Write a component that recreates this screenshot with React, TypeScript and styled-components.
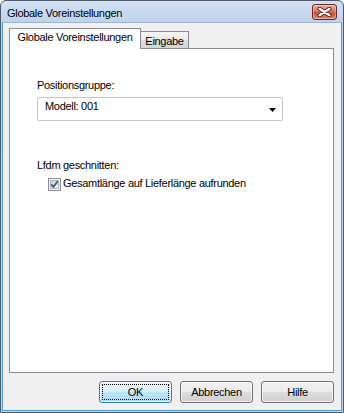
import React from 'react';
import styled, { createGlobalStyle } from 'styled-components';

const GlobalStyle = createGlobalStyle`
  html, body {
    margin: 0;
    padding: 0;
    background: #ffffff;
  }
  * {
    box-sizing: border-box;
  }
`;

const Window = styled.div`
  width: 344px;
  height: 413px;
  display: flex;
  flex-direction: column;
  border: 1px solid #4e5866;
  border-radius: 6px 6px 0 0;
  background: linear-gradient(#d3e1f3, #bed2ec 22px, #c4d7ee);
  font-family: 'Liberation Sans', Arial, sans-serif;
  font-size: 11px;
  letter-spacing: -0.3px;
  color: #000;
  overflow: hidden;
`;

const TitleBar = styled.div`
  height: 21px;
  flex: none;
  display: flex;
  align-items: flex-start;
  justify-content: space-between;
  padding: 0 6px;
`;

const Title = styled.div`
  margin-top: 6px;
  line-height: 13px;
`;

const CloseButton = styled.div`
  margin-top: 3px;
  width: 25px;
  height: 16px;
  display: flex;
  align-items: center;
  justify-content: center;
  border: 1px solid #6b2a21;
  border-radius: 3px;
  background: linear-gradient(#e7ada1, #d27a66 45%, #c24d36 55%, #d98a74);
  box-shadow: inset 0 0 0 1px rgba(255, 255, 255, 0.35);
`;

const Client = styled.div`
  flex: 1;
  display: flex;
  flex-direction: column;
  margin: 0 1px 1px 1px;
  border: 1px solid #4e9bd6;
  border-top-color: #9db5d1;
  background: #f0f0f0;
  padding: 5px 7px 7px 6px;
`;

const TabStrip = styled.div`
  height: 20px;
  flex: none;
  display: flex;
  align-items: flex-end;
`;

const Tab = styled.div<{ $active?: boolean; $width: number }>`
  width: ${p => p.$width}px;
  height: ${p => (p.$active ? 21 : 17)}px;
  display: flex;
  justify-content: center;
  padding-top: ${p => (p.$active ? 2 : 3)}px;
  line-height: 13px;
  border: 1px solid #898c95;
  border-bottom: none;
  ${p => (p.$active ? '' : 'border-left: none;')}
  margin-bottom: ${p => (p.$active ? -1 : 0)}px;
  position: relative;
  z-index: ${p => (p.$active ? 1 : 0)};
  background: ${p =>
    p.$active ? '#ffffff' : 'linear-gradient(#f4f4f4, #ebebeb 50%, #dedede 50%, #d6d6d6)'};
`;

const Panel = styled.div`
  flex: 1;
  display: flex;
  flex-direction: column;
  align-items: flex-start;
  border: 1px solid #898c95;
  background: #ffffff;
  padding: 30px 0 0 27px;
`;

const FieldLabel = styled.div<{ $gap?: number }>`
  line-height: 13px;
  margin-top: ${p => p.$gap ?? 0}px;
`;

const Combo = styled.div`
  margin-top: 5px;
  width: 246px;
  height: 24px;
  display: flex;
  align-items: flex-start;
  justify-content: space-between;
  padding: 1px 6px 0 7px;
  border: 1px solid #c4c4c4;
  border-radius: 2px;
  background: #ffffff;
  line-height: 13px;
`;

const ComboText = styled.span`
  padding-top: 1px;
`;

const Arrow = styled.svg`
  align-self: center;
  display: block;
`;

const CheckRow = styled.div`
  margin-top: 5px;
  margin-left: 11px;
  display: flex;
  align-items: flex-start;
  gap: 2px;
  line-height: 13px;
`;

const CheckBox = styled.svg`
  margin-top: 1px;
  display: block;
  flex: none;
`;

const ButtonRow = styled.div`
  flex: none;
  display: flex;
  justify-content: flex-end;
  gap: 8px;
  margin-top: 8px;
`;

const Button = styled.div<{ $default?: boolean }>`
  width: 73px;
  height: 22px;
  display: flex;
  align-items: center;
  justify-content: center;
  position: relative;
  border: 1px solid ${p => (p.$default ? '#3c7fb1' : '#707070')};
  border-radius: 3px;
  background: ${p =>
    p.$default
      ? 'linear-gradient(#eaf6fd, #d9f0fc 50%, #bee6fd 50%, #a7d9f5)'
      : 'linear-gradient(#f2f2f2, #ebebeb 50%, #dddddd 50%, #cfcfcf)'};
  box-shadow: inset 0 0 0 1px rgba(255, 255, 255, 0.7);
  ${p =>
    p.$default
      ? `&::after {
    content: '';
    position: absolute;
    inset: 2px;
    border: 1px dotted #000;
  }`
      : ''}
`;

export default function App() {
  return (
    <>
      <GlobalStyle />
      <Window>
        <TitleBar>
          <Title>Globale Voreinstellungen</Title>
          <CloseButton>
            <svg width="15" height="10" viewBox="0 0 15 10">
              <path d="M2.5 1.8 L12.5 8.2 M12.5 1.8 L2.5 8.2" stroke="#5a2018" strokeWidth="4" strokeLinecap="round" />
              <path d="M2.5 1.8 L12.5 8.2 M12.5 1.8 L2.5 8.2" stroke="#ffffff" strokeWidth="2.2" strokeLinecap="round" />
            </svg>
          </CloseButton>
        </TitleBar>
        <Client>
          <TabStrip>
            <Tab $active $width={132}>Globale Voreinstellungen</Tab>
            <Tab $width={48}>Eingabe</Tab>
          </TabStrip>
          <Panel>
            <FieldLabel>Positionsgruppe:</FieldLabel>
            <Combo>
              <ComboText>Modell: 001</ComboText>
              <Arrow width="7" height="4" viewBox="0 0 7 4">
                <polygon points="0,0 7,0 3.5,4" fill="#000" />
              </Arrow>
            </Combo>
            <FieldLabel $gap={38}>Lfdm geschnitten:</FieldLabel>
            <CheckRow>
              <CheckBox width="13" height="13" viewBox="0 0 13 13">
                <defs>
                  <linearGradient id="cbfill" x1="0" y1="0" x2="1" y2="1">
                    <stop offset="0" stopColor="#c9ccd1" />
                    <stop offset="1" stopColor="#f4f4f4" />
                  </linearGradient>
                </defs>
                <rect x="0.5" y="0.5" width="12" height="12" fill="#f4f4f4" stroke="#8e8f8f" />
                <rect x="2.5" y="2.5" width="8" height="8" fill="url(#cbfill)" stroke="#b4b8be" />
                <path d="M3.2 6.4 L5.4 8.8 L9.8 3.2" fill="none" stroke="#42568a" strokeWidth="1.8" />
              </CheckBox>
              <span>Gesamtlänge auf Lieferlänge aufrunden</span>
            </CheckRow>
          </Panel>
          <ButtonRow>
            <Button $default>OK</Button>
            <Button>Abbrechen</Button>
            <Button>Hilfe</Button>
          </ButtonRow>
        </Client>
      </Window>
    </>
  );
}
